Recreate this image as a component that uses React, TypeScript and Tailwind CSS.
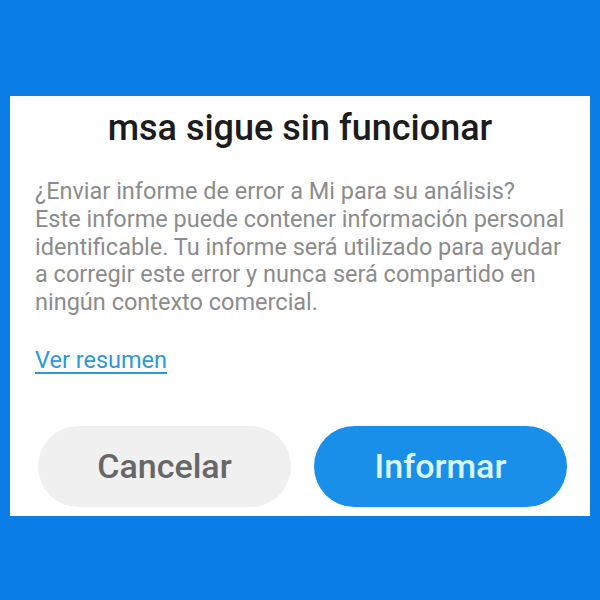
export default function App() {
  return (
    <div className="flex h-[600px] w-[600px] flex-col bg-[#0b7de6] font-['Roboto',sans-serif]">
      <div className="mx-[10px] mt-[96px] flex h-[420px] flex-col bg-white">
        <h1 className="mt-[12px] text-center text-[36px] font-medium leading-[40px] text-[#1c1c1c]">
          msa sigue sin funcionar
        </h1>
        <p className="mt-[30px] whitespace-nowrap pl-[25px] text-[23.5px] leading-[27.8px] text-[#8c8c8c]">
          ¿Enviar informe de error a Mi para su análisis?
          <br />
          Este informe puede contener información personal
          <br />
          identificable. Tu informe será utilizado para ayudar
          <br />
          a corregir este error y nunca será compartido en
          <br />
          ningún contexto comercial.
        </p>
        <a className="mt-[29px] self-start pl-[25px] text-[23.5px] leading-[28px] text-[#2a9ad8] underline underline-offset-[4px]">
          Ver resumen
        </a>
        <div className="mt-auto mb-[9px] flex gap-[23px] pl-[28px] pr-[23px]">
          <button className="h-[81px] flex-1 rounded-full bg-[#f0f0f0] text-[34px] font-medium text-[#676767]">
            Cancelar
          </button>
          <button className="h-[81px] flex-1 rounded-full bg-[#1a8fea] text-[34px] font-medium text-[#d9f6ff]">
            Informar
          </button>
        </div>
      </div>
    </div>
  )
}
